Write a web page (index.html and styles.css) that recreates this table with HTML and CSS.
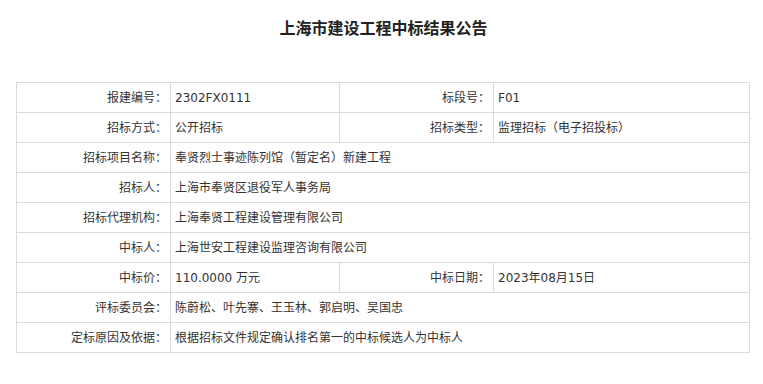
FILE: index.html
```html
<!DOCTYPE html>
<html lang="zh-CN">
<head>
<meta charset="utf-8">
<title>上海市建设工程中标结果公告</title>
<link rel="stylesheet" href="styles.css">
</head>
<body>
<div class="page">
  <h1 class="title">上海市建设工程中标结果公告</h1>
  <table class="info">
    <colgroup>
      <col class="c1"><col class="c2"><col class="c3"><col class="c4">
    </colgroup>
    <tr>
      <th>报建编号：</th><td>2302FX0111</td>
      <th>标段号：</th><td>F01</td>
    </tr>
    <tr>
      <th>招标方式：</th><td>公开招标</td>
      <th>招标类型：</th><td>监理招标（电子招投标）</td>
    </tr>
    <tr>
      <th>招标项目名称：</th><td colspan="3">奉贤烈士事迹陈列馆（暂定名）新建工程</td>
    </tr>
    <tr>
      <th>招标人：</th><td colspan="3">上海市奉贤区退役军人事务局</td>
    </tr>
    <tr>
      <th>招标代理机构：</th><td colspan="3">上海奉贤工程建设管理有限公司</td>
    </tr>
    <tr>
      <th>中标人：</th><td colspan="3">上海世安工程建设监理咨询有限公司</td>
    </tr>
    <tr>
      <th>中标价：</th><td>110.0000 万元</td>
      <th>中标日期：</th><td>2023年08月15日</td>
    </tr>
    <tr>
      <th>评标委员会：</th><td colspan="3">陈蔚松、叶先寨、王玉林、郭启明、吴国忠</td>
    </tr>
    <tr>
      <th>定标原因及依据：</th><td colspan="3">根据招标文件规定确认排名第一的中标候选人为中标人</td>
    </tr>
  </table>
</div>
</body>
</html>
```

FILE: styles.css
```css
html, body {
  margin: 0;
  padding: 0;
  background: #fff;
}
body {
  font-family: "DejaVu Sans", "Noto Sans CJK SC", sans-serif;
  color: #333;
  font-size: 12px;
}
.page {
  padding: 17px 15px 0 16px;
}
.title {
  margin: 0 0 45px 0;
  font-family: "Noto Sans CJK SC", sans-serif;
  font-size: 16px;
  line-height: 20px;
  font-weight: bold;
  text-align: center;
  color: #222;
  padding-left: 3px;
}
.info {
  width: 733px;
  border-collapse: collapse;
  table-layout: fixed;
}
.c1 { width: 154px; }
.c2 { width: 169px; }
.c3 { width: 154px; }
.c4 { width: 256px; }
.info th,
.info td {
  border: 1px solid #dadada;
  height: 29px;
  padding: 0;
  font-size: 12px;
  line-height: 16px;
  font-weight: normal;
  color: #333;
  white-space: nowrap;
}
.info th {
  text-align: right;
  padding-right: 3px;
}
.info td {
  text-align: left;
  padding-left: 4px;
}
```
